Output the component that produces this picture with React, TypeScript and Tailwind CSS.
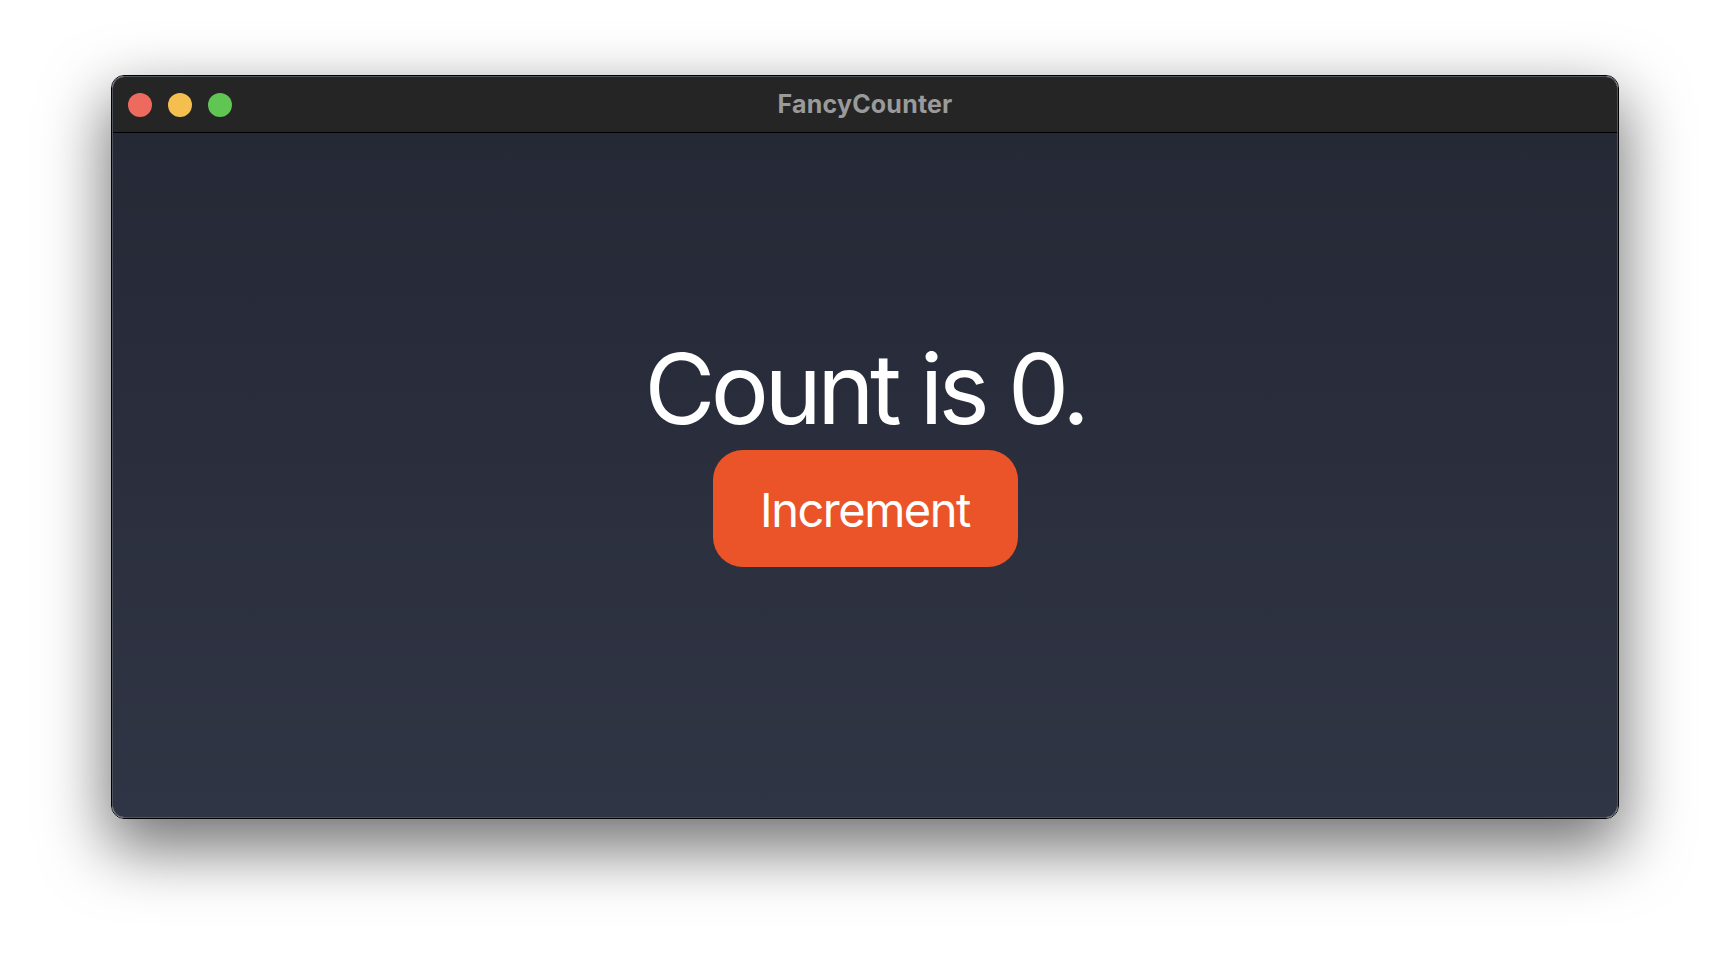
import React, { useState } from 'react';

export default function App() {
  const [count, setCount] = useState(0);

  return (
    <div className="w-[1730px] h-[966px] bg-white pl-[111px] pt-[75px] overflow-hidden font-['Inter',sans-serif]">
      {/* Window */}
      <div className="w-[1508px] h-[744px] rounded-[13px] border border-black shadow-[0_26px_64px_4px_rgba(0,0,0,0.55)]">
        <div className="h-full rounded-[12px] border border-[#50545e] overflow-hidden flex flex-col">
          {/* Title bar */}
          <div className="relative h-[56px] shrink-0 bg-[#252525] border-b border-black flex items-center pl-[15px] gap-[16px]">
            <span className="w-[24px] h-[24px] rounded-full bg-[#ec6a5e]" />
            <span className="w-[24px] h-[24px] rounded-full bg-[#f4bf4f]" />
            <span className="w-[24px] h-[24px] rounded-full bg-[#61c554]" />
            <div className="absolute inset-0 flex items-center justify-center pointer-events-none">
              <span className="text-[25px] font-bold text-[#9a9a9a] tracking-[0.2px]">FancyCounter</span>
            </div>
          </div>

          {/* Content */}
          <div className="flex-1 bg-gradient-to-b from-[#252835] to-[#303545] flex flex-col items-center justify-center pb-[43px]">
            <div className="text-[97px] leading-[98px] text-white tracking-[-4.6px]">Count is {count}.</div>
            <button
              onClick={() => setCount(count + 1)}
              className="mt-[12px] w-[305px] h-[117px] rounded-[30px] bg-[#eb5428] text-white text-[47px] tracking-[-1.5px] pt-[4px] flex items-center justify-center"
            >
              Increment
            </button>
          </div>
        </div>
      </div>
    </div>
  );
}
